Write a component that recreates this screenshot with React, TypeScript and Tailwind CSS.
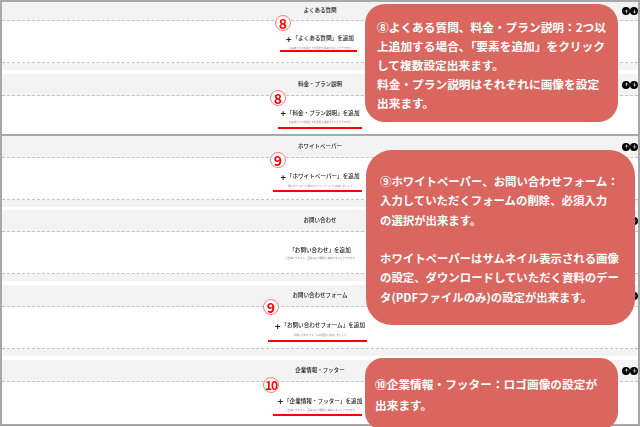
import React from "react";
import { ArrowUp, ArrowDown } from "lucide-react";

const jp = "font-['Noto_Sans_CJK_JP','Noto_Sans',sans-serif]";

function Arrows() {
  return (
    <div className="flex gap-0">
      <span className="flex h-[8px] w-[8px] items-center justify-center rounded-full bg-black">
        <ArrowUp size={5} color="#fff" strokeWidth={3} />
      </span>
      <span className="flex h-[8px] w-[8px] items-center justify-center rounded-full bg-black">
        <ArrowDown size={5} color="#fff" strokeWidth={3} />
      </span>
    </div>
  );
}

type SectionProps = {
  title: string;
  add: string;
  sub: string;
  plus?: boolean;
  headerH: string;
  bodyH: string;
  bodyPad?: string;
  footer?: boolean;
  gapH?: string;
};

function Section({ title, add, sub, plus = true, headerH, bodyH, bodyPad = "pt-[3px]", footer = true, gapH = "h-[4px]" }: SectionProps) {
  return (
    <section>
      <div className={`grid grid-cols-[1fr_auto_1fr] items-center border-b border-dashed border-[#c4c4c4] bg-[#f3f3f3] ${headerH}`}>
        <div />
        <h2 className="text-[5.5px] leading-none font-medium text-[#222]">{title}</h2>
        <div className="flex justify-end"><Arrows /></div>
      </div>
      <div className={`flex flex-col items-center justify-center bg-white ${bodyPad} ${bodyH} ${footer ? "border-b border-dashed border-[#c4c4c4]" : ""}`}>
        <div className="flex items-center text-[5.6px] leading-none font-medium text-[#222]">
          {plus && <span className="mr-[1px] text-[9px] leading-none font-bold">+</span>}
          <span>{add}</span>
        </div>
        <p className="mt-[3px] text-[2.5px] leading-none text-[#888]">{sub}</p>
      </div>
      {footer && (
        <>
          <div className="h-[7px] bg-[#f3f3f3]" />
          <div className={`bg-white ${gapH}`} />
        </>
      )}
    </section>
  );
}

function Badge({ n, cls }: { n: string; cls: string }) {
  return (
    <span className={`absolute flex h-[16px] w-[16px] items-center justify-center rounded-full border border-[#ff7a7a] bg-white leading-none font-bold text-[#ff0000] ${cls}`}>
      {n}
    </span>
  );
}

function Callout({ cls, children }: { cls: string; children: React.ReactNode }) {
  return (
    <div className={`absolute whitespace-nowrap bg-[#d9675f] font-bold text-white ${cls}`}>
      {children}
    </div>
  );
}

export default function App() {
  return (
    <div className={`relative h-[427px] w-[640px] overflow-hidden bg-white ${jp}`}>
      <div className="blur-[0.4px]">
        <div className="border-x-2 border-t-2 border-b-2 border-[#a8a8a8]">
          <Section headerH="h-[19px]" bodyH="h-[42px]" bodyPad="pt-[1px]" title="よくある質問" add="「よくある質問」を追加" sub="お客様からの質問とその回答を掲載することができます" />
          <Section headerH="h-[22px]" bodyH="h-[38px]" footer={false} title="料金・プラン説明" add="「料金・プラン説明」を追加" sub="お客様からの質問とその回答を掲載することができます" />
        </div>
        <div className="border-x-2 border-b-2 border-[#a8a8a8]">
          <Section headerH="h-[22px]" bodyH="h-[42px]" gapH="h-[3px]" title="ホワイトペーパー" add="「ホワイトペーパー」を追加" sub="資料ダウンロード用のホワイトペーパーを追加しましょう" />
          <Section headerH="h-[22px]" bodyH="h-[42px]" plus={false} title="お問い合わせ" add="「お問い合わせ」を追加" sub="ご自由にテキスト、画像などの要素を掲載することができます" />
          <Section headerH="h-[22px]" bodyH="h-[42px]" title="お問い合わせフォーム" add="「お問い合わせフォーム」を追加" sub="お問い合わせフォームの項目を追加しましょう" />
          <Section headerH="h-[22px]" bodyH="h-[42px]" bodyPad="pt-[3px]" footer={false} title="企業情報・フッター" add="「企業情報・フッター」を追加" sub="ご自由にテキスト、画像などの要素を掲載することができます" />
        </div>
      </div>

      <Badge n="8" cls="left-[275px] top-[15px] text-[14px]" />
      <Badge n="8" cls="left-[270px] top-[90px] text-[14px]" />
      <Badge n="9" cls="left-[270px] top-[152px] text-[14px]" />
      <Badge n="9" cls="left-[263px] top-[299px] text-[14px]" />
      <Badge n="10" cls="left-[263px] top-[377px] text-[12px] tracking-[-1px]" />

      <div className="absolute left-[280px] top-[50px] h-[2px] w-[77px] bg-[#f00]" />
      <div className="absolute left-[278px] top-[127px] h-[2px] w-[84px] bg-[#f00]" />
      <div className="absolute left-[273px] top-[190px] h-[2px] w-[89px] bg-[#f00]" />
      <div className="absolute left-[268px] top-[340px] h-[2px] w-[99px] bg-[#f00]" />
      <div className="absolute left-[273px] top-[414px] h-[2px] w-[89px] bg-[#f00]" />

      <Callout cls="left-[365px] top-[4px] h-[118px] w-[253px] rounded-[20px] pl-[12px] pt-[13px] text-[11.7px] leading-[19px]">
        ⑧よくある質問、料金・プラン説明：2つ以<br />
        上追加する場合、「要素を追加」をクリック<br />
        して複数設定出来ます。<br />
        料金・プラン説明はそれぞれに画像を設定<br />
        出来ます。
      </Callout>
      <Callout cls="left-[366px] top-[150px] h-[175px] w-[269px] rounded-[26px] pl-[14px] pt-[22px] text-[11.4px] leading-[19.3px]">
        ⑨ホワイトペーパー、お問い合わせフォーム：<br />
        入力していただくフォームの削除、必須入力<br />
        の選択が出来ます。<br />
        <br />
        ホワイトペーパーはサムネイル表示される画像<br />
        の設定、ダウンロードしていただく資料のデー<br />
        タ(PDFファイルのみ)の設定が出来ます。
      </Callout>
      <Callout cls="left-[365px] top-[358px] h-[72px] w-[253px] rounded-[18px] pl-[10px] pt-[15px] text-[11.7px] leading-[21px]">
        ⑩企業情報・フッター：ロゴ画像の設定が<br />
        出来ます。
      </Callout>
    </div>
  );
}
